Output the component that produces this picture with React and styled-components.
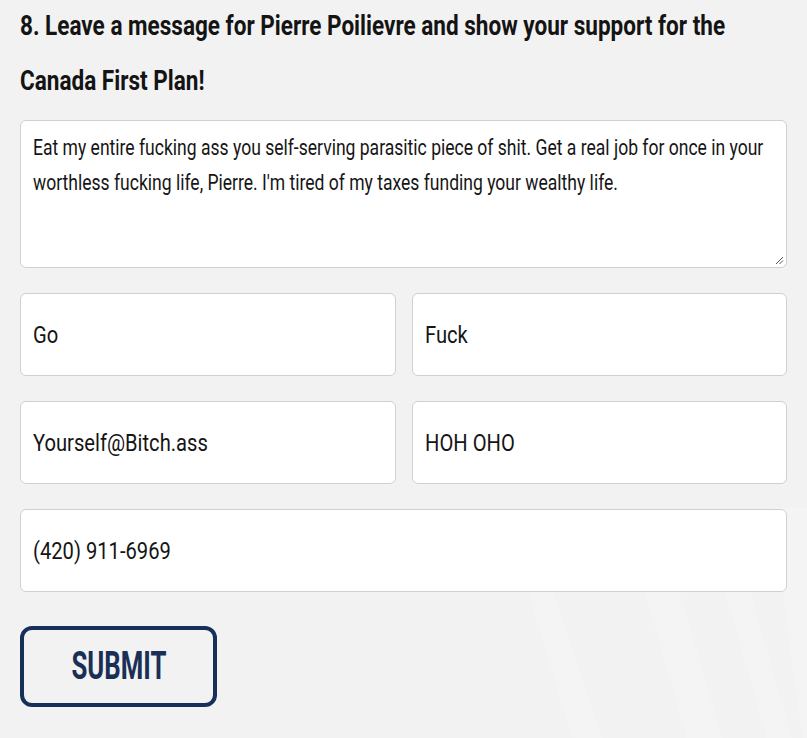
import React from "react";
import styled, { createGlobalStyle } from "styled-components";

const FONT = `Roboto, "DejaVu Sans Condensed", "Liberation Sans", sans-serif`;

const Global = createGlobalStyle`
  html, body { margin: 0; padding: 0; background: #f2f2f2; }
  body { font-family: ${FONT}; }
  * { box-sizing: border-box; }
`;

const Page = styled.div`
  position: relative;
  width: 807px;
  height: 738px;
  overflow: hidden;
  background: #f2f2f2;
`;

const Watermark = styled.svg`
  position: absolute;
  right: 0;
  bottom: 0;
  width: 420px;
  height: 260px;
  pointer-events: none;
`;

const Form = styled.form`
  position: relative;
  padding: 0 20px;
  display: flex;
  flex-direction: column;
`;

const Heading = styled.h2`
  margin: -2px 0 12px;
  width: ${(p) => 767 / p.$sx}px;
  transform: scaleX(${(p) => p.$sx});
  transform-origin: left top;
  font-family: ${FONT};
  font-weight: 700;
  font-size: 28px;
  line-height: 55px;
  color: #141414;
`;

const FieldBox = styled.div`
  position: relative;
  grid-column: ${(p) => (p.$full ? "1 / -1" : "auto")};
  height: ${(p) => p.$h}px;
  background: #fff;
  border: 1px solid #d0d0d0;
  border-radius: 6px;
  overflow: hidden;
`;

const Squeezed = `
  display: block;
  height: 100%;
  margin: 0;
  border: 0;
  background: transparent;
  outline: none;
  color: #151515;
  font-family: ${FONT};
  transform-origin: left top;
`;

const TextArea = styled.textarea`
  ${Squeezed}
  width: ${(p) => 100 / p.$sx}%;
  transform: scaleX(${(p) => p.$sx});
  padding: 9px ${(p) => 12 / p.$sx}px;
  font-size: 22px;
  line-height: 35px;
  resize: none;
`;

const Grip = styled.svg`
  position: absolute;
  right: 2px;
  bottom: 2px;
  width: 10px;
  height: 10px;
  pointer-events: none;
`;

const Grid = styled.div`
  display: grid;
  grid-template-columns: 1fr 1fr;
  column-gap: 16px;
  row-gap: 25px;
  margin-top: 25px;
`;

const Input = styled.input`
  ${Squeezed}
  width: ${(p) => 100 / p.$sx}%;
  transform: scaleX(${(p) => p.$sx});
  padding: 0 ${(p) => 12 / p.$sx}px;
  font-size: 24px;
`;

const SubmitButton = styled.button`
  margin-top: 34px;
  width: 197px;
  height: 81px;
  border: 4px solid #17305a;
  border-radius: 12px;
  background: transparent;
  color: #1a2f56;
  display: flex;
  align-items: center;
  justify-content: center;
  padding: 0;
  cursor: pointer;
`;

const ButtonLabel = styled.span`
  display: inline-block;
  font-family: ${FONT};
  font-weight: 700;
  font-size: 39px;
  line-height: 1;
  transform: scaleX(0.66);
`;

const message =
  "Eat my entire fucking ass you self-serving parasitic piece of shit. Get a real job for once in your worthless fucking life, Pierre. I'm tired of my taxes funding your wealthy life.";

const fields = [
  { value: "Go" },
  { value: "Fuck" },
  { value: "Yourself@Bitch.ass" },
  { value: "HOH OHO" },
  { value: "(420) 911-6969", full: true },
];

export default function App() {
  return (
    <Page>
      <Global />
      <Watermark viewBox="0 0 420 260" aria-hidden="true">
        <g fill="#ffffff" opacity="0.22">
          <polygon points="140,110 165,110 215,260 185,260" />
          <polygon points="245,70 280,70 335,260 300,260" />
          <polygon points="320,50 345,50 405,260 380,260" />
          <polygon points="385,30 420,30 420,260 415,260" />
        </g>
      </Watermark>
      <Form onSubmit={(e) => e.preventDefault()}>
        <Heading $sx={0.805}>
          8. Leave a message for Pierre Poilievre and show your support for the Canada First Plan!
        </Heading>
        <FieldBox $h={148}>
          <TextArea $sx={0.797} defaultValue={message} />
          <Grip viewBox="0 0 10 10" aria-hidden="true">
            <path d="M9 2 L2 9 M9 5.5 L5.5 9" stroke="#555" strokeWidth="1" />
          </Grip>
        </FieldBox>
        <Grid>
          {fields.map((f) => (
            <FieldBox key={f.value} $h={83} $full={f.full}>
              <Input $sx={0.84} defaultValue={f.value} />
            </FieldBox>
          ))}
        </Grid>
        <SubmitButton type="submit">
          <ButtonLabel>SUBMIT</ButtonLabel>
        </SubmitButton>
      </Form>
    </Page>
  );
}
